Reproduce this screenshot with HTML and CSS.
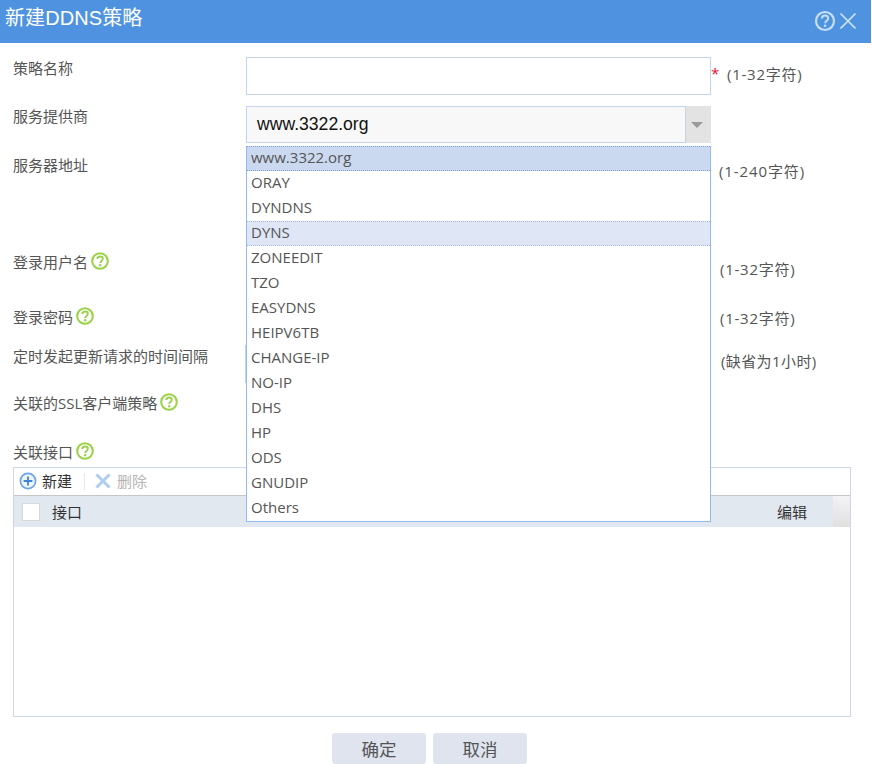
FILE: index.html
```html
<!DOCTYPE html>
<html lang="zh-CN">
<head>
<meta charset="utf-8">
<title>新建DDNS策略</title>
<link rel="stylesheet" href="styles.css">
</head>
<body>
<div class="dialog">
  <header class="titlebar">
    <h1 class="title">新建DDNS策略</h1>
    <div class="title-tools">
      <svg class="tool-help" width="22" height="22" viewBox="0 0 22 22"><circle cx="11" cy="11" r="9" fill="none" stroke="#c6def7" stroke-width="2.2"/><path d="M7.9 8.6c0-2 1.4-3.1 3.2-3.1s3.1 1.1 3.1 2.8c0 2.4-3 2.5-3 4.9" fill="none" stroke="#c6def7" stroke-width="2"/><circle cx="11.1" cy="15.8" r="1.3" fill="#c6def7"/></svg>
      <svg class="tool-close" width="18" height="18" viewBox="0 0 18 18"><path d="M1.5 1.5l15 15M16.5 1.5l-15 15" fill="none" stroke="#d5e6f9" stroke-width="1.6"/></svg>
    </div>
  </header>

  <form class="form">
    <div class="row row-name">
      <div class="label">策略名称</div>
      <input class="input" type="text">
      <div class="hint hint-name"><span class="star">*</span><span class="hint-wide">(1-32字符)</span></div>
    </div>
    <div class="row row-provider">
      <div class="label">服务提供商</div>
      <div class="select">
        <div class="select-value">www.3322.org</div>
        <div class="select-btn"><span class="arrow"></span></div>
      </div>
    </div>
    <div class="row row-server">
      <div class="label">服务器地址</div>
      <div></div>
      <div class="hint hint-server hint-wider">(1-240字符)</div>
    </div>
    <div class="row row-user">
      <div class="label">登录用户名<svg class="qmark" width="18" height="18" viewBox="0 0 18 18"><use href="#q"/></svg></div>
      <div></div>
      <div class="hint hint-user hint-wide">(1-32字符)</div>
    </div>
    <div class="row row-pwd">
      <div class="label">登录密码<svg class="qmark" width="18" height="18" viewBox="0 0 18 18"><use href="#q"/></svg></div>
      <div></div>
      <div class="hint hint-pwd hint-wide">(1-32字符)</div>
    </div>
    <div class="row row-interval">
      <div class="label">定时发起更新请求的时间间隔</div>
      <input class="input input-interval" type="text">
      <div class="hint hint-interval">(缺省为1小时)</div>
    </div>
    <div class="row row-ssl">
      <div class="label">关联的SSL客户端策略<svg class="qmark" width="18" height="18" viewBox="0 0 18 18"><use href="#q"/></svg></div>
    </div>
    <div class="row row-iface">
      <div class="label">关联接口<svg class="qmark" width="18" height="18" viewBox="0 0 18 18"><use href="#q"/></svg></div>
    </div>

    <ul class="dropdown">
      <li class="opt opt-selected">www.3322.org</li>
      <li class="opt">ORAY</li>
      <li class="opt">DYNDNS</li>
      <li class="opt opt-hover">DYNS</li>
      <li class="opt">ZONEEDIT</li>
      <li class="opt">TZO</li>
      <li class="opt">EASYDNS</li>
      <li class="opt">HEIPV6TB</li>
      <li class="opt">CHANGE-IP</li>
      <li class="opt">NO-IP</li>
      <li class="opt">DHS</li>
      <li class="opt">HP</li>
      <li class="opt">ODS</li>
      <li class="opt">GNUDIP</li>
      <li class="opt">Others</li>
    </ul>
  </form>

  <section class="grid">
    <div class="toolbar">
      <span class="tbtn">
        <svg width="18" height="18" viewBox="0 0 18 18"><circle cx="9" cy="9" r="7.6" fill="#eef5fd" stroke="#6ea4e4" stroke-width="1.7"/><path d="M9 4.6v8.8M4.6 9h8.8" stroke="#3f84d8" stroke-width="1.8"/></svg>
        新建
      </span>
      <span class="tsep"></span>
      <span class="tbtn tbtn-off">
        <svg width="18" height="18" viewBox="0 0 18 18"><path d="M2.5 2.5l13 13M15.5 2.5l-13 13" stroke="#aecdf0" stroke-width="3"/></svg>
        删除
      </span>
    </div>
    <div class="thead">
      <span class="check"></span>
      <span class="th th-iface">接口</span>
      <span class="th th-edit">编辑</span>
      <span class="th-scroll"></span>
    </div>
    <div class="tbody"></div>
  </section>

  <footer class="actions">
    <button class="btn" type="button">确定</button>
    <button class="btn" type="button">取消</button>
  </footer>
</div>

<svg class="defs" width="0" height="0">
  <symbol id="q" viewBox="0 0 18 18">
    <circle cx="9" cy="9" r="7.8" fill="#fff" stroke="#9bd249" stroke-width="2.1"/>
    <path d="M6.3 7.1c0-1.7 1.2-2.6 2.8-2.6s2.7.9 2.7 2.3c0 2-2.6 2.2-2.6 4.2" fill="none" stroke="#9bd249" stroke-width="1.9"/>
    <circle cx="9.2" cy="13.3" r="1.2" fill="#9bd249"/>
  </symbol>
</svg>
</body>
</html>
```
FILE: styles.css
```css
* { box-sizing: border-box; }
html, body { margin: 0; padding: 0; }
body {
  width: 872px;
  height: 764px;
  overflow: hidden;
  background: #fff;
  color: #555;
  font-family: "Open Sans", "Noto Sans CJK SC", sans-serif;
  font-size: 15px;
}
.defs { position: absolute; }
.dialog { width: 872px; }

.titlebar {
  width: 871px;
  height: 43px;
  background: #4f93e0;
  display: flex;
  align-items: center;
  justify-content: space-between;
  padding: 0 14px 0 5px;
}
.title {
  margin: 0 0 8px;
  font-family: "Liberation Sans", "Noto Sans CJK SC", sans-serif;
  font-size: 20px;
  font-weight: 400;
  line-height: 28px;
  letter-spacing: .1px;
  color: #fff;
}
.title-tools { display: flex; align-items: center; gap: 3px; margin-bottom: 1px; }
.title-tools svg { display: block; }

.form { position: relative; padding: 14px 0 0 13px; }
.row {
  display: grid;
  grid-template-columns: 233px 465px 1fr;
  align-items: start;
}
.row-name { height: 49px; }
.row-provider { height: 49px; }
.row-server { height: 96px; }
.row-user { height: 55px; }
.row-pwd { height: 39px; }
.row-interval { height: 47px; }
.row-ssl { height: 49px; }
.row-iface { height: 26px; }

.label {
  display: flex;
  align-items: center;
  gap: 3px;
  height: 22px;
  line-height: 22px;
  white-space: nowrap;
}
.row-provider .label,
.row-server .label { margin-top: -1px; }
.qmark { flex: none; margin-top: -2px; }

.input {
  display: block;
  width: 465px;
  height: 38px;
  margin: 0;
  padding: 0 8px;
  background: #fff;
  border: 1px solid #c3d3ea;
}
.input-interval { width: 200px; margin-left: -1px; }

.select {
  display: flex;
  width: 465px;
  height: 37px;
}
.select-value {
  flex: 1;
  background: #f8f8f8;
  border: 1px solid #c3d3ea;
  padding-left: 10px;
  font-family: "Liberation Sans", sans-serif;
  font-size: 17.6px;
  line-height: 35px;
  color: #111;
}
.select-btn {
  width: 25px;
  background: #e3e3e3;
  display: flex;
  align-items: center;
  justify-content: center;
}
.arrow {
  width: 0;
  height: 0;
  margin-right: 3px;
  border-left: 6px solid transparent;
  border-right: 6px solid transparent;
  border-top: 6px solid #9a9a9a;
}

.hint { line-height: 22px; white-space: nowrap; letter-spacing: .4px; }
.hint-wide { letter-spacing: .75px; }
.hint-wider { letter-spacing: .9px; }
.hint-name { padding: 6px 0 0 0; display: flex; }
.star { color: #e8132a; width: 16px; line-height: 20px; font-weight: 400; }
.hint-server { padding: 5px 0 0 8px; }
.hint-user { padding: 7px 0 0 9px; }
.hint-pwd { padding: 1px 0 0 9px; }
.hint-interval { padding: 5px 0 0 10px; }

.dropdown {
  position: absolute;
  left: 246px;
  top: 103px;
  width: 465px;
  height: 376px;
  margin: 0;
  padding: 0;
  list-style: none;
  background: #fff;
  border-left: 1px solid #8fbcf2;
  border-right: 1px solid #8fbcf2;
  border-bottom: 1px solid #8fbcf2;
  z-index: 2;
}
.opt {
  height: 25px;
  line-height: 21px;
  padding: 0 4px;
  border: 1px dotted transparent;
  border-left: 0;
  border-right: 0;
  color: #555;
}
.opt-selected { background: #cad9f0; border-color: #7f9fd0; }
.opt-hover { background: #dfe7f6; border-color: #a3b8dc; }

.grid {
  width: 838px;
  height: 250px;
  margin: 0 0 0 13px;
  border: 1px solid #cdd6ea;
  display: flex;
  flex-direction: column;
}
.toolbar {
  display: flex;
  align-items: center;
  height: 27px;
  padding: 0 0 1px 5px;
  color: #333;
}
.tbtn { display: flex; align-items: center; gap: 5px; line-height: 20px; }
.tbtn svg { display: block; }
.tbtn-off { color: #b4b4b4; }
.tsep { width: 1px; height: 17px; margin: 0 9px 0 12px; background: #e6e6e6; }
.thead {
  display: flex;
  align-items: center;
  height: 32px;
  background: #e1e8ef;
  border-top: 1px solid #c6c6c6;
  color: #333;
  padding-left: 8px;
}
.check {
  width: 18px;
  height: 18px;
  background: #fff;
  border: 1px solid #d8d8d8;
}
.th-iface { margin-left: 12px; }
.th-edit { margin-left: auto; margin-right: 26px; }
.th-scroll {
  align-self: stretch;
  width: 17px;
  background: linear-gradient(#f3f3f3, #e0e0e0);
}
.tbody { flex: 1; }

.actions {
  display: flex;
  gap: 7px;
  padding: 16px 0 0 332px;
}
.btn {
  width: 94px;
  height: 31px;
  margin: 0;
  padding: 0;
  background: #dfe4ef;
  border: 0;
  border-radius: 3px;
  color: #555;
  font: inherit;
  font-size: 17.5px;
}
```
